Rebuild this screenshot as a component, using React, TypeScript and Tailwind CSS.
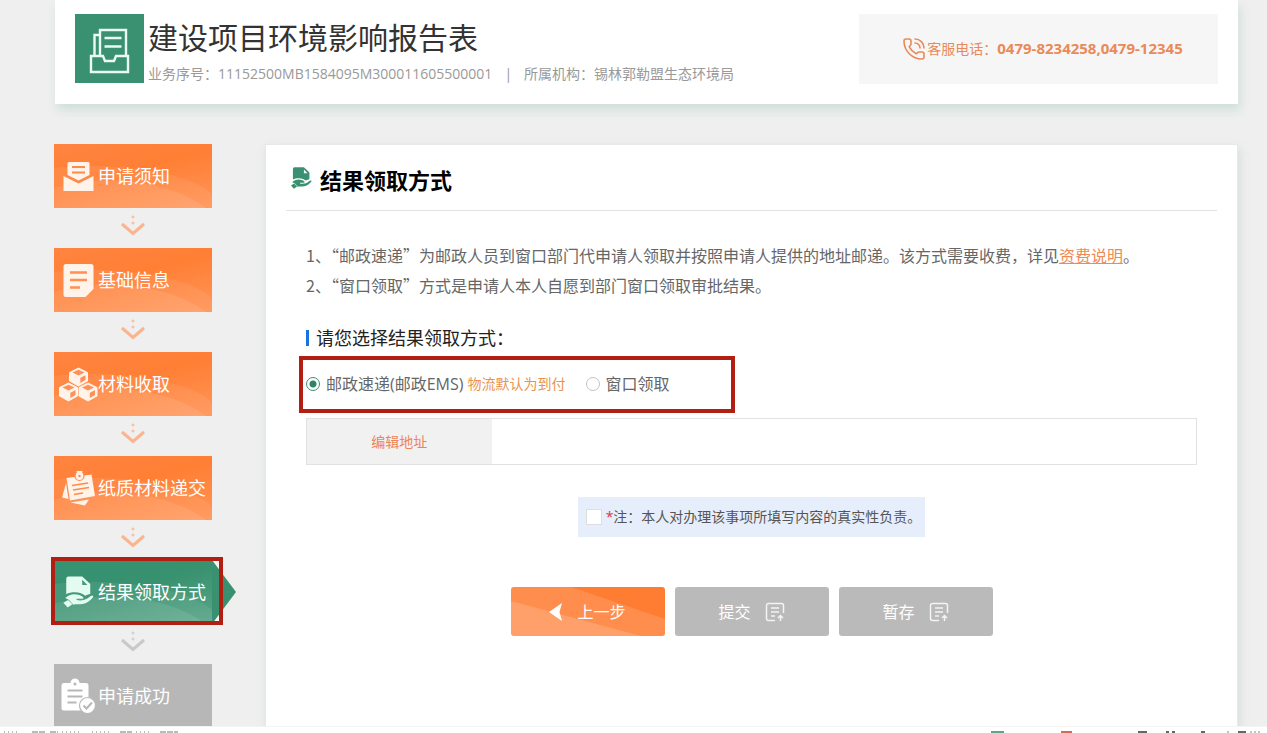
import { useState } from "react";
import type { ReactNode } from "react";
import { PhoneCall } from "lucide-react";

type StepState = "done" | "current" | "pending";

type Step = {
  label: string;
  state: StepState;
  icon: ReactNode;
};

const STEP_BG: Record<StepState, string> = {
  done: "bg-[linear-gradient(165deg,#ff8440_0%,#ff7f35_45%,#ff9558_100%)]",
  current: "bg-[linear-gradient(165deg,#359272_0%,#38916f_45%,#5aa68a_100%)]",
  pending: "bg-[#b7b7b7]",
};

function NoticeIcon() {
  return (
    <svg viewBox="0 0 40 40" className="size-10" fill="#fff3ea">
      <path d="M11 6h19a1.500 1.500 0 0 1 1.500 1.500V19L20.500 24.500 9.500 19V7.500A1.500 1.500 0 0 1 11 6z" />
      <path d="M5.500 20 20.500 27.500 35.500 20V35H5.500z" />
      <path d="M14 11h13M14 16.500h13" stroke="#ff8a4a" strokeWidth="2" />
    </svg>
  );
}

function FormIcon() {
  return (
    <svg viewBox="0 0 40 40" className="size-10">
      <path
        d="M8 4h25a2.500 2.500 0 0 1 2.500 2.500V29l-8 8H8a2.500 2.500 0 0 1-2.500-2.500v-28A2.500 2.500 0 0 1 8 4z"
        fill="#fff3ea"
      />
      <path d="M12 12.500h17M12 20h17M12 27.500h10" stroke="#ff8f52" strokeWidth="2.400" />
    </svg>
  );
}

function Cube({ x, y }: { x: number; y: number }) {
  return (
    <g transform={`translate(${x} ${y})`}>
      <path d="M9 0 18 4.500V13L9 18 0 13V4.500z" fill="#fff3ea" stroke="#fff3ea" strokeLinejoin="round" />
      <path d="M9 1.800 15 4.600 9 7.400 3 4.600z" fill="#ff9058" />
      <path d="M10.800 9.800 16 7.200v4.800l-5.200 2.900z" fill="#ff9058" />
    </g>
  );
}

function CubesIcon() {
  return (
    <svg viewBox="0 0 40 40" className="size-10">
      <Cube x={11.5} y={4} />
      <Cube x={1.5} y={19} />
      <Cube x={21} y={19} />
    </svg>
  );
}

function PaperIcon() {
  return (
    <svg viewBox="0 0 40 40" className="size-10" fill="#fff3ea">
      <path d="M8 15 10.500 31 4 29.500z" />
      <path d="M12.500 34.500 31 31.500 27 37.500z" />
      <path d="M8.500 10 33.500 6.500 37 28 12 32.500z" />
      <path d="M14 17.500 30 15M15 22 31 19.500M16 26.500 25 25" stroke="#ff8a4a" strokeWidth="1.500" />
      <circle cx="21.500" cy="8" r="4.500" stroke="#ff8a4a" strokeWidth="1.200" />
      <path d="M18.500 3h6l-1 5a2 2 0 0 1-4 0z" />
      <circle cx="21.500" cy="8" r="1.200" fill="#ff8a4a" />
    </svg>
  );
}

function HandDocIcon({ className }: { className: string }) {
  return (
    <svg viewBox="4 3 32 34" className={className} fill="currentColor">
      <path
        fillRule="evenodd"
        d="M10 3.500h14.500L33 11.500V22c-2 .2-4 1.300-5.500 2-2.500-2.300-6-3.700-10.500-3.700-4 0-7 .6-9.500 2.200V6A2.500 2.500 0 0 1 10 3.500zM24.500 7v5.500h5.500z"
      />
      <path d="M6.500 26.500c2.500-2.700 6-4.200 9.500-4.200 4 0 7.500 1.300 9.500 3.400.6 1-.2 1.600-1.500 1.600h-5.500v1.200c4 .9 8 .3 10.500-1 2.200-1.300 3.500-3 5.500-3.600 1.500-.3 2.200.7 1.300 1.900-2.800 3.500-6.800 6.200-10.800 7-4 .6-7.500 0-10 .7L10.500 28.500z" />
      <path d="M4.500 31.500 9.500 28.500l4.500 4.500L9 36.500z" />
    </svg>
  );
}

function ClipboardIcon() {
  return (
    <svg viewBox="0 0 40 40" className="size-10">
      <path
        d="M6 7h6.500a4.500 4.500 0 0 1 9 0H28a2.500 2.500 0 0 1 2.500 2.500v25H6A2.500 2.500 0 0 1 3.500 32V9.500A2.500 2.500 0 0 1 6 7z"
        fill="#fff"
      />
      <circle cx="17" cy="8" r="1.500" fill="#b7b7b7" />
      <path d="M9.500 14.500h15M9.500 20.500h15M9.500 26.500h9" stroke="#b7b7b7" strokeWidth="2.200" />
      <circle cx="29.500" cy="29.500" r="8" fill="#fff" stroke="#b7b7b7" strokeWidth="1.200" />
      <path d="m25.500 29.500 3 3 5.500-6" fill="none" stroke="#b7b7b7" strokeWidth="2" />
    </svg>
  );
}

function TrayIcon() {
  return (
    <svg viewBox="0 0 69 69" className="size-[69px] shrink-0 bg-[#3a9171]" fill="none" stroke="#e9fbf4" strokeWidth="2.400">
      <path d="M16 42h12l2 5h9l2-5h12v16H16z" />
      <path d="M25 41V16h26v25M19.500 41V21H25" />
      <path d="M29.500 24h17M29.500 32.500h17" />
    </svg>
  );
}

function UploadDocIcon() {
  return (
    <svg viewBox="0 0 20 20" className="size-5" fill="none" stroke="#f4f4f4" strokeWidth="1.500">
      <path d="M10 18.500H3.500a2 2 0 0 1-2-2v-13a2 2 0 0 1 2-2h13a2 2 0 0 1 2 2V11" />
      <path d="M6 6h8M6 10h8M6 14h4M15.500 19v-5.500M13 16l2.500-2.500L18 16" />
    </svg>
  );
}

const STEPS: Step[] = [
  { label: "申请须知", state: "done", icon: <NoticeIcon /> },
  { label: "基础信息", state: "done", icon: <FormIcon /> },
  { label: "材料收取", state: "done", icon: <CubesIcon /> },
  { label: "纸质材料递交", state: "done", icon: <PaperIcon /> },
  {
    label: "结果领取方式",
    state: "current",
    icon: <HandDocIcon className="mx-1 size-8 text-[#e4fbf2]" />,
  },
  { label: "申请成功", state: "pending", icon: <ClipboardIcon /> },
];

function Swoosh() {
  return (
    <svg
      viewBox="0 0 158 64"
      preserveAspectRatio="none"
      className="absolute inset-0 h-full w-full"
      fill="#fff"
      aria-hidden="true"
    >
      <path d="M0 24C60 18 130 26 158 50V64H0z" opacity=".07" />
      <path d="M0 44C50 30 115 36 152 64H0z" opacity=".09" />
    </svg>
  );
}

function StepArrow({ color }: { color: string }) {
  return (
    <div className="flex h-10 items-center justify-center pb-1" aria-hidden="true">
      <svg viewBox="0 0 24 22" className="h-[22px] w-6" fill="none" stroke={color}>
        <path d="m1 9 11 9.500L23 9" strokeWidth="3" />
        <circle cx="12" cy="2" r="1" strokeWidth="1" />
        <circle cx="12" cy="8" r="1" strokeWidth="1" />
      </svg>
    </div>
  );
}

function StepItem({ step }: { step: Step }) {
  const current = step.state === "current";
  return (
    <div
      className={`relative flex h-16 items-center pl-1 text-lg text-white ${STEP_BG[step.state]}`}
      aria-current={current ? "step" : undefined}
    >
      {step.state !== "pending" && <Swoosh />}
      {current && (
        <>
          <svg viewBox="0 0 24 64" className="absolute left-full top-0 h-16 w-6" aria-hidden="true">
            <path d="M0 0h8v64H0z" fill="#f7f5ee" />
            <path d="M0 0 24 32 0 64z" fill="#3a9171" />
          </svg>
          <div className="absolute -left-[3px] -right-[11px] -top-[3px] -bottom-px border-4 border-[#b11f12]" />
        </>
      )}
      <span className="relative">{step.icon}</span>
      <span className="relative whitespace-nowrap">{step.label}</span>
    </div>
  );
}

function Header() {
  return (
    <header className="flex items-start justify-between bg-white pb-[18px] pl-5 pr-5 pt-[14px] shadow-[2px_6px_10px_#cfdeda]">
      <div className="flex gap-1">
        <TrayIcon />
        <div>
          <h1 className="text-[30px] leading-[48px] text-[#333]">建设项目环境影响报告表</h1>
          <p className="text-sm leading-6 text-[#999]">
            业务序号：11152500MB1584095M300011605500001
            <span className="mx-3">|</span>
            所属机构：锡林郭勒盟生态环境局
          </p>
        </div>
      </div>
      <div className="flex h-[70px] w-[359px] items-center justify-center gap-px bg-[#f6f6f6] pl-2 text-sm text-[#e98a58]">
        <PhoneCall size={24} strokeWidth={1.6} />
        <span>
          客服电话：<b className="text-[15px] font-bold">0479-8234258,0479-12345</b>
        </span>
      </div>
    </header>
  );
}

const RADIO =
  "size-[14px] appearance-none rounded-full border border-[#c4c4c4] bg-white checked:border-[#3a9171] checked:bg-[radial-gradient(circle,#2f8465_3px,transparent_4px)]";

export default function App() {
  const [method, setMethod] = useState("ems");
  const [agreed, setAgreed] = useState(false);

  return (
    <div
      lang="zh-CN"
      className="flex h-screen flex-col overflow-hidden bg-[#efefef] font-['Open_Sans','Noto_Sans_CJK_SC',sans-serif]"
    >
      <div className="flex min-h-0 flex-1 flex-col overflow-hidden pl-[55px] pr-[29px]">
        <Header />

        <div className="flex flex-1 gap-[53px] pt-10">
          <nav className="-ml-px w-[158px] shrink-0" aria-label="办理步骤">
            {STEPS.map((step, i) => (
              <div key={step.label}>
                {i > 0 && <StepArrow color={step.state === "pending" ? "#c9c9c9" : "#fbb48c"} />}
                <StepItem step={step} />
              </div>
            ))}
          </nav>

          <main className="flex-1 border border-b-0 border-[#e8e8e8] bg-white px-5 shadow-[2px_4px_10px_#d6dddb]">
            <div className="flex h-[66px] items-center gap-2 border-b border-[#e2e2e2] pl-1 pt-1">
              <HandDocIcon className="mb-1 size-[22px] text-[#3a9171]" />
              <h2 className="text-[22px] font-bold leading-8 text-black">结果领取方式</h2>
            </div>

            <div className="px-5 pt-[29px]">
              <div className="font-['Noto_Sans_CJK_SC',sans-serif] text-base leading-[30px] text-[#666]">
                <p>
                  1、“邮政速递”为邮政人员到窗口部门代申请人领取并按照申请人提供的地址邮递。该方式需要收费，详见
                  <a href="#fee" className="text-[#ee8a55] underline">
                    资费说明
                  </a>
                  。
                </p>
                <p>2、“窗口领取”方式是申请人本人自愿到部门窗口领取审批结果。</p>
              </div>

              <h3 className="mt-[26px] flex items-center gap-[7px] text-lg leading-6 text-[#222]">
                <span className="h-4 w-[3px] bg-[#1673e0]" />
                请您选择结果领取方式：
              </h3>

              <div className="relative mt-1.5 flex h-[57px] items-center pb-0.5 text-base text-[#666]">
                <div className="pointer-events-none absolute -left-[7px] inset-y-0 w-[436px] border-4 border-[#b11f12]" />
                <label className="flex items-center">
                  <input
                    type="radio"
                    name="method"
                    className={RADIO}
                    checked={method === "ems"}
                    onChange={() => setMethod("ems")}
                  />
                  <span className="ml-1.5">邮政速递(邮政EMS)</span>
                  <span className="ml-1 text-sm text-[#e9934f]">物流默认为到付</span>
                </label>
                <label className="ml-5 flex items-center">
                  <input
                    type="radio"
                    name="method"
                    className={RADIO}
                    checked={method === "window"}
                    onChange={() => setMethod("window")}
                  />
                  <span className="ml-1.5">窗口领取</span>
                </label>
              </div>

              <table className="mt-[5px] w-full border border-[#e2e2e2] text-sm">
                <tbody>
                  <tr className="h-[46px]">
                    <th className="w-[185px] bg-[#f1f1f1] font-normal">
                      <button type="button" className="text-[#ee8458]">
                        编辑地址
                      </button>
                    </th>
                    <td />
                  </tr>
                </tbody>
              </table>
            </div>

            <label className="mx-auto mt-8 flex h-10 w-fit items-center bg-[#e7eefb] pl-2 pr-1 text-sm text-[#555]">
              <input
                type="checkbox"
                className="mr-1 size-4 appearance-none border border-[#dedede] bg-white checked:bg-[#3a9171]"
                checked={agreed}
                onChange={(e) => setAgreed(e.target.checked)}
              />
              <span className="text-[#d9364a]">*</span>
              注：本人对办理该事项所填写内容的真实性负责。
            </label>

            <div className="mt-[50px] flex justify-center gap-[10px] text-base text-white">
              <button
                type="button"
                className="relative flex h-[49px] w-[154px] items-center justify-center gap-[14px] overflow-hidden rounded-[3px] bg-[#ff7d33]"
              >
                <svg
                  viewBox="0 0 154 49"
                  preserveAspectRatio="none"
                  className="absolute inset-0 h-full w-full"
                  fill="#fff"
                  aria-hidden="true"
                >
                  <path d="M0 0 60 0 154 32V49H0z" opacity=".13" />
                  <path d="M0 14 130 49H0z" opacity=".16" />
                </svg>
                <svg viewBox="0 0 14 18" className="relative h-[18px] w-[14px]" fill="#fff" aria-hidden="true">
                  <path d="M0 9 13 0 10.500 9 13 18z" />
                </svg>
                <span className="relative">上一步</span>
              </button>
              <button
                type="button"
                className="flex h-[49px] w-[154px] items-center justify-center gap-[14px] rounded-[3px] bg-[#bababa]"
              >
                提交
                <UploadDocIcon />
              </button>
              <button
                type="button"
                className="flex h-[49px] w-[154px] items-center justify-center gap-[14px] rounded-[3px] bg-[#bababa]"
              >
                暂存
                <UploadDocIcon />
              </button>
            </div>
          </main>
        </div>
      </div>

      {/* Top edge of the status strip */}
      <footer className="relative flex h-[7px] shrink-0 items-end justify-between border-t border-[#f4f4f4] bg-white">
        <svg viewBox="0 0 180 2" className="h-0.5 w-[180px]" stroke="#777" aria-hidden="true">
          <path d="M4 1h14M62 1h20M92 1h18M136 1h14" strokeDasharray="1 3" />
          <path d="M32 1h14M50 1h8M120 1h12M160 1h18" strokeDasharray="6 1" />
        </svg>
        <svg viewBox="0 0 280 2" className="h-0.5 w-[280px]" aria-hidden="true">
          <path d="M4 1h13" stroke="#5da58e" strokeWidth="2" />
          <path d="M74 1h11" stroke="#cf6b57" strokeWidth="2" />
          <path d="M151 1h9M179 1h3M185 1h3M214 1h4M251 1h8" stroke="#666" strokeWidth="2" />
          <path d="M240 1h2M263 1h12" stroke="#888" strokeDasharray="2 2" />
        </svg>
      </footer>
    </div>
  );
}
